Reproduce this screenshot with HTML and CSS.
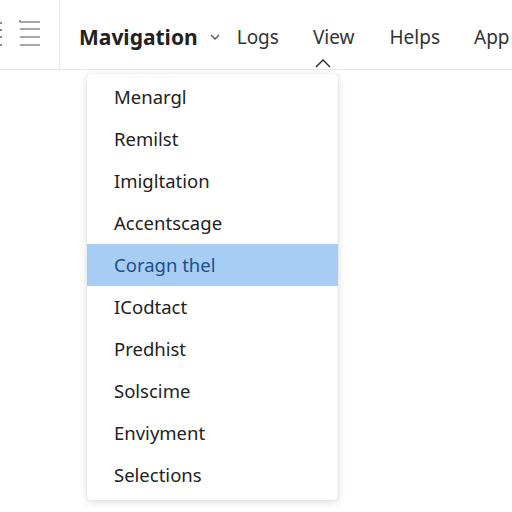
FILE: index.html
```html
<!DOCTYPE html>
<html>
<head>
    <title>Navigation</title>
    <link rel="stylesheet" href="styles.css">
</head>
<body>
    <div class="topbar">
        <div class="side-tools">
            <svg class="list-icon" width="6" height="30" viewBox="0 0 6 30">
                <rect x="0" y="3" width="2" height="2" fill="#8a8a8a"/>
                <rect x="0" y="10" width="2" height="2" fill="#8a8a8a"/>
                <rect x="0" y="17" width="2" height="2" fill="#8a8a8a"/>
                <rect x="0" y="25" width="2" height="2" fill="#8a8a8a"/>
            </svg>
            <svg class="menu-icon" width="22" height="28" viewBox="0 0 22 28">
                <path d="M1 1v2h20M1 10h20M1 18h20M1 26h20" stroke="#8a8a8a" stroke-width="1.6" fill="none"/>
            </svg>
        </div>
        <nav class="nav">
            <span class="nav-title">Mavigation</span>
            <svg class="chev" width="10" height="6" viewBox="0 0 10 6">
                <path d="M1 1l4 4 4-4" stroke="#555" stroke-width="1.3" fill="none"/>
            </svg>
            <a class="nav-link logs" href="#">Logs</a>
            <a class="nav-link view" href="#">View
                <svg class="up-caret" width="16" height="9" viewBox="0 0 16 9">
                    <path d="M1 8l7-7 7 7" stroke="#222" stroke-width="1.3" fill="none"/>
                </svg>
            </a>
            <a class="nav-link helps" href="#">Helps</a>
            <a class="nav-link" href="#">App</a>
        </nav>
    </div>

    <ul class="dropdown">
        <li>Menargl</li>
        <li>Remilst</li>
        <li>Imigltation</li>
        <li>Accentscage</li>
        <li class="active">Coragn thel</li>
        <li>ICodtact</li>
        <li>Predhist</li>
        <li>Solscime</li>
        <li>Enviyment</li>
        <li>Selections</li>
    </ul>
</body>
</html>
```

FILE: styles.css
```css
body {
    margin: 0;
    background: #fff;
    font-family: "Noto Sans", "Open Sans", sans-serif;
    color: #222;
    overflow: hidden;
}

.topbar {
    display: flex;
    height: 69px;
    border-bottom: 1px solid #e6e6e6;
    white-space: nowrap;
}

.side-tools {
    display: flex;
    align-items: flex-start;
    gap: 13px;
    width: 60px;
    flex-shrink: 0;
    padding-top: 19px;
    box-sizing: border-box;
    border-right: 1px solid #e8e8e8;
}

.nav {
    display: flex;
    align-items: center;
    padding-left: 19px;
    padding-top: 4px;
}

.nav-title {
    font-size: 21px;
    font-weight: bold;
    color: #222;
}

.chev {
    margin: 0 17px 0 12px;
}

.nav-link {
    position: relative;
    font-size: 19px;
    color: #333;
    text-decoration: none;
}

.logs {
    margin-right: 34px;
}

.view {
    margin-right: 35px;
}

.helps {
    margin-right: 34px;
}

.up-caret {
    position: absolute;
    left: 2px;
    top: 35px;
}

.dropdown {
    position: absolute;
    left: 87px;
    top: 74px;
    width: 251px;
    margin: 0;
    padding: 2px 0 4px;
    list-style: none;
    background: #fff;
    border-radius: 4px;
    box-shadow: 0 2px 8px rgba(0, 0, 0, 0.14), 0 0 1px rgba(0, 0, 0, 0.2);
}

.dropdown li {
    height: 42px;
    line-height: 42px;
    padding-left: 27px;
    font-size: 18.5px;
    color: #222;
}

.dropdown li.active {
    background: #a7cdf4;
    color: #1c4f8c;
}
```
